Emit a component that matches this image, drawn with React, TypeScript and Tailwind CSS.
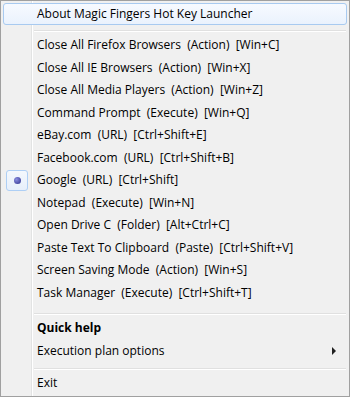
const font = { fontFamily: '"Open Sans", "Noto Sans", sans-serif' };

type Item = { label: string; checked?: boolean; bold?: boolean; submenu?: boolean };

const actions: Item[] = [
  { label: "Close All Firefox Browsers  (Action)  [Win+C]" },
  { label: "Close All IE Browsers  (Action)  [Win+X]" },
  { label: "Close All Media Players  (Action)  [Win+Z]" },
  { label: "Command Prompt  (Execute)  [Win+Q]" },
  { label: "eBay.com  (URL)  [Ctrl+Shift+E]" },
  { label: "Facebook.com  (URL)  [Ctrl+Shift+B]" },
  { label: "Google  (URL)  [Ctrl+Shift]", checked: true },
  { label: "Notepad  (Execute)  [Win+N]" },
  { label: "Open Drive C  (Folder)  [Alt+Ctrl+C]" },
  { label: "Paste Text To Clipboard  (Paste)  [Ctrl+Shift+V]" },
  { label: "Screen Saving Mode  (Action)  [Win+S]" },
  { label: "Task Manager  (Execute)  [Ctrl+Shift+T]" },
];

function Separator({ top }: { top: string }) {
  return (
    <div className={`${top} mb-[2px] ml-[31px] mr-[1px]`}>
      <div className="h-px bg-[#e0e0e0]" />
      <div className="h-px bg-white" />
    </div>
  );
}

function Row({ item }: { item: Item }) {
  return (
    <div className="flex h-[22.5px] items-center">
      <div className="flex h-full w-[28px] items-center justify-center">
        {item.checked && (
          <div className="flex h-[21px] w-[22px] items-center justify-center rounded-[3px] border border-[#aecff5] bg-[linear-gradient(#f4f8fd,#e6effb)]">
            <div className="h-[7px] w-[7px] rounded-full bg-[radial-gradient(circle_at_35%_35%,#8a8ee0,#2c2f8c)]" />
          </div>
        )}
      </div>
      <span
        className={`ml-[6px] whitespace-pre text-[12px] text-black ${item.bold ? "font-bold" : ""}`}
      >
        {item.label}
      </span>
      {item.submenu && (
        <div className="ml-auto mr-[11px] h-0 w-0 border-y-[4px] border-l-[4px] border-y-transparent border-l-[#202020]" />
      )}
    </div>
  );
}

export default function App() {
  return (
    <div
      style={font}
      className="flex h-[397px] w-[350px] flex-col border border-[#a0a0a0] bg-[#f0f0f0] bg-[linear-gradient(to_right,#f0f0f0_30px,#e2e3e3_30px,#e2e3e3_31px,#ffffff_31px,#ffffff_32px,#f0f0f0_32px)] px-[2px] pt-[2px]"
    >
      <div className="flex h-[22px] items-center rounded-[3px] border border-[#a8caf0] bg-[linear-gradient(#f7faff,#eaf2fd)]">
        <span className="ml-[33px] whitespace-pre text-[12px] text-black">
          About Magic Fingers Hot Key Launcher
        </span>
      </div>
      <Separator top="mt-[5px]" />
      {actions.map((a) => (
        <Row key={a.label} item={a} />
      ))}
      <Separator top="mt-[9px]" />
      <Row item={{ label: "Quick help", bold: true }} />
      <Row item={{ label: "Execution plan options", submenu: true }} />
      <Separator top="mt-[6px]" />
      <Row item={{ label: "Exit" }} />
    </div>
  );
}
